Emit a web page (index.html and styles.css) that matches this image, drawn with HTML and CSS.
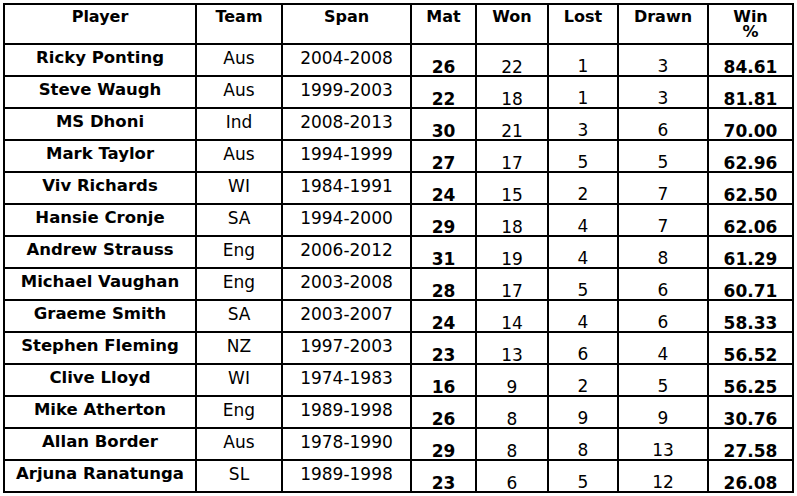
FILE: index.html
```html
<!DOCTYPE html>
<html>
<head>
<meta charset="utf-8">
<link rel="stylesheet" href="styles.css">
</head>
<body>
<table class="stats">
<thead>
<tr>
<th class="c-player">Player</th>
<th class="c-team">Team</th>
<th class="c-span">Span</th>
<th class="c-mat">Mat</th>
<th class="c-won">Won</th>
<th class="c-lost">Lost</th>
<th class="c-drawn">Drawn</th>
<th class="c-win">Win<br>%</th>
</tr>
</thead>
<tbody>
<tr><td class="name">Ricky Ponting</td><td class="txt">Aus</td><td class="txt">2004-2008</td><td class="mat">26</td><td class="won">22</td><td class="ld">1</td><td class="ld">3</td><td class="pct">84.61</td></tr>
<tr><td class="name">Steve Waugh</td><td class="txt">Aus</td><td class="txt">1999-2003</td><td class="mat">22</td><td class="won">18</td><td class="ld">1</td><td class="ld">3</td><td class="pct">81.81</td></tr>
<tr><td class="name">MS Dhoni</td><td class="txt">Ind</td><td class="txt">2008-2013</td><td class="mat">30</td><td class="won">21</td><td class="ld">3</td><td class="ld">6</td><td class="pct">70.00</td></tr>
<tr><td class="name">Mark Taylor</td><td class="txt">Aus</td><td class="txt">1994-1999</td><td class="mat">27</td><td class="won">17</td><td class="ld">5</td><td class="ld">5</td><td class="pct">62.96</td></tr>
<tr><td class="name">Viv Richards</td><td class="txt">WI</td><td class="txt">1984-1991</td><td class="mat">24</td><td class="won">15</td><td class="ld">2</td><td class="ld">7</td><td class="pct">62.50</td></tr>
<tr><td class="name">Hansie Cronje</td><td class="txt">SA</td><td class="txt">1994-2000</td><td class="mat">29</td><td class="won">18</td><td class="ld">4</td><td class="ld">7</td><td class="pct">62.06</td></tr>
<tr><td class="name">Andrew Strauss</td><td class="txt">Eng</td><td class="txt">2006-2012</td><td class="mat">31</td><td class="won">19</td><td class="ld">4</td><td class="ld">8</td><td class="pct">61.29</td></tr>
<tr><td class="name">Michael Vaughan</td><td class="txt">Eng</td><td class="txt">2003-2008</td><td class="mat">28</td><td class="won">17</td><td class="ld">5</td><td class="ld">6</td><td class="pct">60.71</td></tr>
<tr><td class="name">Graeme Smith</td><td class="txt">SA</td><td class="txt">2003-2007</td><td class="mat">24</td><td class="won">14</td><td class="ld">4</td><td class="ld">6</td><td class="pct">58.33</td></tr>
<tr><td class="name">Stephen Fleming</td><td class="txt">NZ</td><td class="txt">1997-2003</td><td class="mat">23</td><td class="won">13</td><td class="ld">6</td><td class="ld">4</td><td class="pct">56.52</td></tr>
<tr><td class="name">Clive Lloyd</td><td class="txt">WI</td><td class="txt">1974-1983</td><td class="mat">16</td><td class="won">9</td><td class="ld">2</td><td class="ld">5</td><td class="pct">56.25</td></tr>
<tr><td class="name">Mike Atherton</td><td class="txt">Eng</td><td class="txt">1989-1998</td><td class="mat">26</td><td class="won">8</td><td class="ld">9</td><td class="ld">9</td><td class="pct">30.76</td></tr>
<tr><td class="name">Allan Border</td><td class="txt">Aus</td><td class="txt">1978-1990</td><td class="mat">29</td><td class="won">8</td><td class="ld">8</td><td class="ld">13</td><td class="pct">27.58</td></tr>
<tr><td class="name">Arjuna Ranatunga</td><td class="txt">SL</td><td class="txt">1989-1998</td><td class="mat">23</td><td class="won">6</td><td class="ld">5</td><td class="ld">12</td><td class="pct">26.08</td></tr>
</tbody>
</table>
</body>
</html>
```
FILE: styles.css
```css
html, body {
  margin: 0;
  padding: 0;
  background: #fff;
}
body {
  padding: 3px 0 0 3px;
  font-family: "DejaVu Sans", Verdana, sans-serif;
  color: #000;
}
.stats {
  border-collapse: separate;
  border-spacing: 0;
  table-layout: fixed;
  width: 791px;
  border-top: 2px solid #000;
  border-left: 2px solid #000;
}
.stats th,
.stats td {
  box-sizing: border-box;
  border-right: 2px solid #000;
  border-bottom: 2px solid #000;
  padding: 0;
  text-align: center;
  vertical-align: top;
  white-space: nowrap;
}
.stats thead tr { height: 40px; }
.stats tbody tr { height: 32px; }
.stats th {
  font-size: 16px;
  font-weight: bold;
  line-height: 15px;
  padding-top: 4px;
}
.c-player { width: 192px; }
.c-team { width: 86px; }
.c-span { width: 129px; }
.c-mat { width: 65px; }
.c-won { width: 72px; }
.c-lost { width: 70px; }
.c-drawn { width: 90px; }
.c-win { width: 85px; }

.name {
  font-size: 16.5px;
  font-weight: bold;
  line-height: 18px;
  padding-top: 4px !important;
}
.txt {
  font-size: 17px;
  line-height: 18px;
  padding-top: 4px !important;
}
.mat {
  font-size: 17px;
  font-weight: bold;
  line-height: 16px;
  padding-top: 14px !important;
}
.won {
  font-size: 17px;
  line-height: 16px;
  padding-top: 14px !important;
}
.ld {
  font-size: 17px;
  line-height: 16px;
  padding-top: 13px !important;
}
.pct {
  font-size: 17px;
  font-weight: bold;
  line-height: 16px;
  padding-top: 14px !important;
}
```
